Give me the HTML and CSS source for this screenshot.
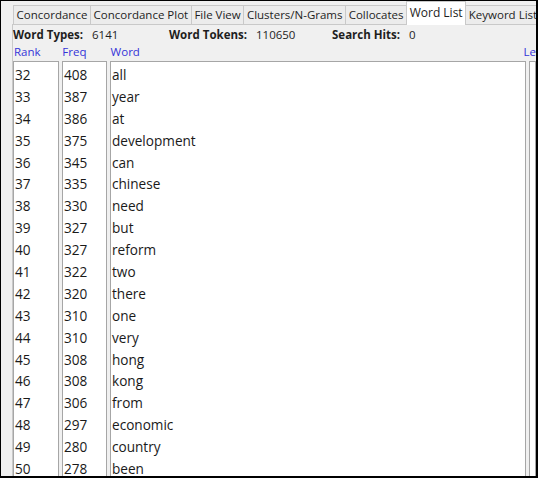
FILE: index.html
```html
<!DOCTYPE html>
<html>
<head>
  <meta charset="UTF-8" />
  <title>Word List</title>
  <link rel="stylesheet" href="styles.css">
</head>
<body>
  <div class="frame">
    <div class="tabs">
      <div class="tab">Concordance</div>
      <div class="tab">Concordance Plot</div>
      <div class="tab">File View</div>
      <div class="tab">Clusters/N-Grams</div>
      <div class="tab">Collocates</div>
      <div class="tab active">Word List</div>
      <div class="tab">Keyword List</div>
    </div>
    <div class="pane">
      <div class="stats">
        <div class="stat stat-types"><b>Word Types:</b><span>6141</span></div>
        <div class="stat stat-tokens"><b>Word Tokens:</b><span>110650</span></div>
        <div class="stat"><b>Search Hits:</b><span>0</span></div>
      </div>
      <div class="heads">
        <div class="head col-rank">Rank</div>
        <div class="head col-freq">Freq</div>
        <div class="head col-word">Word</div>
        <div class="head col-lemma">Le</div>
      </div>
      <div class="lists">
        <div class="list col-rank" id="rankList"></div>
        <div class="list col-freq" id="freqList"></div>
        <div class="list col-word" id="wordList"></div>
        <div class="list col-lemma"></div>
      </div>
    </div>
  </div>

  <script>
    // rank, freq, word
    const rows = [
      [32, 408, "all"],
      [33, 387, "year"],
      [34, 386, "at"],
      [35, 375, "development"],
      [36, 345, "can"],
      [37, 335, "chinese"],
      [38, 330, "need"],
      [39, 327, "but"],
      [40, 327, "reform"],
      [41, 322, "two"],
      [42, 320, "there"],
      [43, 310, "one"],
      [44, 310, "very"],
      [45, 308, "hong"],
      [46, 308, "kong"],
      [47, 306, "from"],
      [48, 297, "economic"],
      [49, 280, "country"],
      [50, 278, "been"]
    ];

    function fill(id, idx) {
      const list = document.getElementById(id);
      rows.forEach(r => {
        const item = document.createElement('div');
        item.className = 'item';
        item.textContent = r[idx];
        list.appendChild(item);
      });
    }

    fill('rankList', 0);
    fill('freqList', 1);
    fill('wordList', 2);
  </script>
</body>
</html>
```

FILE: styles.css
```css
html, body {
  margin: 0;
  padding: 0;
}
body {
  width: 538px;
  height: 478px;
  overflow: hidden;
  background: #f0f0f0;
  font-family: "Open Sans", "Noto Sans", sans-serif;
  color: #1e1e1e;
}
.frame {
  box-sizing: border-box;
  width: 538px;
  height: 478px;
  border-top: 1px solid #000;
  border-left: 1px solid #000;
  border-right: 2px solid #000;
  border-bottom: 2px solid #000;
  background: #f0f0f0;
  padding-left: 11px;
  overflow: hidden;
  display: flex;
  flex-direction: column;
}
.tabs {
  display: flex;
  align-items: flex-end;
  height: 23px;
  padding-left: 1px;
  white-space: nowrap;
  position: relative;
  z-index: 1;
}
.tab {
  height: 18px;
  line-height: 18px;
  padding: 0 2.6px;
  font-size: 11.5px;
  border: 1px solid #c9c9c9;
  border-bottom: none;
  border-right: none;
  background: #ececec;
  color: #1e1e1e;
}
.tab.active {
  height: 23px;
  line-height: 22px;
  font-size: 12px;
  background: #fff;
  border-right: 1px solid #c9c9c9;
  margin-bottom: -1px;
}
.tab.active + .tab {
  border-left: none;
}
.pane {
  flex: 1;
  border-top: 1px solid #c9c9c9;
  border-left: 1px solid #c9c9c9;
  display: flex;
  flex-direction: column;
  min-height: 0;
}
.stats {
  display: flex;
  height: 19px;
  line-height: 19px;
  font-size: 11.5px;
}
.stat b {
  font-weight: 700;
  margin-right: 9px;
}
.stat-types {
  width: 156px;
}
.stat-tokens {
  width: 163px;
}
.heads {
  display: flex;
  height: 16px;
  line-height: 16px;
  font-size: 11.5px;
}
.head {
  color: #3434d8;
  padding-left: 1px;
}
.col-rank {
  width: 48px;
}
.col-freq {
  width: 48px;
}
.col-word {
  width: 418px;
}
.col-lemma {
  flex: 1;
}
.lists {
  flex: 1;
  display: flex;
  gap: 3px;
  min-height: 0;
  padding-top: 1px;
}
.list {
  box-sizing: border-box;
  background: #fff;
  border: 1px solid #a6a6a6;
  border-bottom: none;
  padding-top: 2px;
  overflow: hidden;
}
.lists .col-rank {
  width: 46px;
}
.lists .col-freq {
  width: 45px;
}
.lists .col-word {
  width: 416px;
}
.item {
  height: 21.9px;
  line-height: 21.9px;
  padding-left: 1px;
  font-size: 13.6px;
  color: #1a1a1a;
}
```
